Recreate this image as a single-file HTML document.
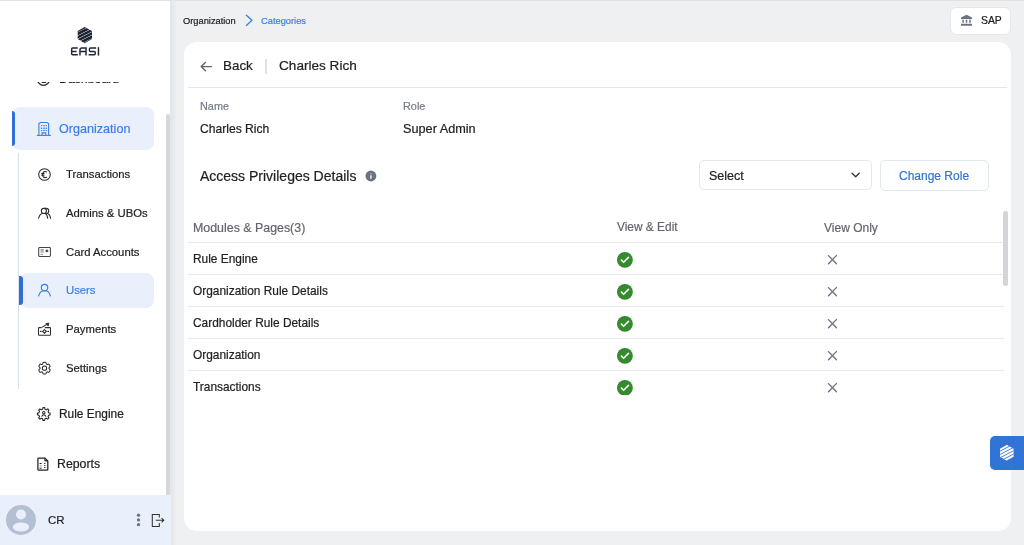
<!DOCTYPE html>
<html><head><meta charset="utf-8">
<style>
*{box-sizing:border-box;margin:0;padding:0}
html,body{width:1024px;height:545px;overflow:hidden;background:#eff0f2;font-family:"Liberation Sans",sans-serif;color:#212121}
.a{position:absolute;white-space:nowrap;line-height:1;will-change:transform;-webkit-text-stroke:0.2px currentColor}
svg{position:absolute;overflow:visible}
#topline{position:absolute;left:0;top:0;width:1024px;height:1px;background:#e2e3e5;z-index:5}
#side{position:absolute;left:0;top:0;width:171px;height:545px;background:#fff;overflow:hidden}
#shadow{position:absolute;left:171px;top:1px;width:6px;height:544px;background:linear-gradient(90deg,#e4e5e8,#eff0f2)}
.navact{position:absolute;background:#e9f0fc;border-radius:8px}
.bar{position:absolute;background:#2f6fd6;border-radius:0 3px 3px 0}
#card{position:absolute;left:184px;top:42px;width:827px;height:489px;background:#fff;border-radius:13px}
.line{position:absolute;height:1px;background:#e6e8eb}
</style></head><body>
<div id="topline"></div>
<div id="side">
  <!-- dashboard (clipped) -->
  <div class="a" style="left:59px;top:73px;font-size:12.3px">Dashboard</div>
  <svg style="left:30px;top:68px" width="30" height="22" viewBox="0 0 30 22" fill="none" stroke="#2a2a2a" stroke-width="1.15"><circle cx="13.5" cy="11.2" r="6.1"/><path d="M12.1 14.3H15.7" stroke-linecap="round"/></svg>
  <div style="position:absolute;left:0;top:0;width:170px;height:82px;background:#fff"></div>
  <!-- logo -->
  <div style="position:absolute;left:69px;top:26px;width:31px;height:31px;border-radius:6px;box-shadow:0 0 5px rgba(0,0,0,0.025)"></div>
  <svg style="left:77px;top:27px" width="15" height="16" viewBox="0 0 15 16">
    <defs><clipPath id="hx"><polygon points="7.6,0 15,3.9 15,12.1 7.6,16.2 0.7,12.1 0.7,3.9"/></clipPath></defs>
    <g clip-path="url(#hx)" stroke="#1b2130" stroke-width="2.6">
      <line x1="-4" y1="6" x2="18" y2="-5"/><line x1="-4" y1="9.3" x2="18" y2="-1.7"/><line x1="-4" y1="12.6" x2="18" y2="1.6"/><line x1="-4" y1="15.9" x2="18" y2="4.9"/><line x1="-4" y1="19.2" x2="18" y2="8.2"/><line x1="-4" y1="22.5" x2="18" y2="11.5"/>
    </g>
  </svg>
  <svg style="left:68px;top:43.6px" width="34" height="14" viewBox="0 0 34 14" fill="none" stroke="#1f2535" stroke-width="1.45">
    <path d="M9.8 4.05H4.7Q3.65 4.05 3.65 5.1V9.7Q3.65 10.75 4.7 10.75H9.8M3.65 7.4H8.6"/>
    <path d="M11.95 11.6V6Q11.95 4.05 13.9 4.05H18.05V11.6M11.95 7.4H18.05"/>
    <path d="M28.1 4.05H22.5Q21.45 4.05 21.45 5.1V6.4Q21.45 7.4 22.5 7.4H26.2Q27.25 7.4 27.25 8.5V9.7Q27.25 10.75 26.2 10.75H20.6"/>
    <path d="M30.45 3.2V11.6"/>
  </svg>

  <!-- Organization active -->
  <div class="navact" style="left:12px;top:107px;width:142px;height:43px"></div>
  <div class="bar" style="left:12px;top:111px;width:3px;height:35px"></div>
  <div class="a" style="left:59px;top:123px;font-size:12.6px;color:#3b7ee2">Organization</div>

  <!-- sub line -->
  <div style="position:absolute;left:18px;top:153px;width:1px;height:236px;background:#d9e0eb"></div>

  <div class="a" style="left:66px;top:169px;font-size:11.3px">Transactions</div>
  <div class="a" style="left:66px;top:208px;font-size:11.3px">Admins &amp; UBOs</div>
  <div class="a" style="left:66px;top:247px;font-size:11.3px">Card Accounts</div>
  <div class="navact" style="left:20px;top:273px;width:134px;height:35px"></div>
  <div class="bar" style="left:19px;top:276px;width:4px;height:29px"></div>
  <div class="a" style="left:66px;top:285px;font-size:11.3px;color:#3b7ee2">Users</div>
  <div class="a" style="left:66px;top:324px;font-size:11.3px">Payments</div>
  <div class="a" style="left:66px;top:363px;font-size:11.3px">Settings</div>

  <div class="a" style="left:59px;top:409px;font-size:11.9px">Rule Engine</div>
  <div class="a" style="left:57px;top:458px;font-size:12.3px">Reports</div>


  <!-- icons -->
  <svg style="left:33px;top:117px" width="22" height="23" viewBox="0 0 22 23" fill="none" stroke="#3b7ee2" stroke-width="1.1">
    <path d="M3.8 18.4H17.9"/>
    <path d="M5.9 18.4V6.6L7.4 5.5H14.1L15.6 6.6V18.4"/>
    <path d="M9.1 18.4V15.9H12.7V18.4"/>
    <g fill="#3b7ee2" stroke="none">
      <circle cx="8.4" cy="8.6" r="0.7"/><circle cx="11" cy="8.6" r="0.7"/><circle cx="13.4" cy="8.6" r="0.7"/>
      <circle cx="8.4" cy="11.3" r="0.7"/><circle cx="11" cy="11.3" r="0.7"/><circle cx="13.4" cy="11.3" r="0.7"/>
      <circle cx="8.4" cy="13.6" r="0.7"/><circle cx="11" cy="13.6" r="0.7"/><circle cx="13.4" cy="13.6" r="0.7"/>
    </g>
    <path d="M8.4 8.6H13.4M8.4 11.3H13.4M8.4 13.6H13.4M11 8.6V13.6" stroke-width="0.5" opacity="0.6"/>
  </svg>
  <svg style="left:34px;top:164px" width="22" height="22" viewBox="0 0 22 22" fill="none" stroke="#2a2a2a" stroke-width="1.05">
    <circle cx="10.5" cy="10.5" r="5.8"/>
    <path d="M12.9 8.1Q12.3 7.4 11.2 7.4Q8.6 7.4 8.6 10.5Q8.6 13.6 11.2 13.6Q12.3 13.6 12.9 12.9"/>
    <path d="M7.3 9.6H10.4M7.3 11.2H10.4"/>
  </svg>
  <svg style="left:34px;top:202px" width="22" height="22" viewBox="0 0 22 22" fill="none" stroke="#2a2a2a" stroke-width="1.05">
    <circle cx="9.9" cy="8.9" r="2.55"/>
    <path d="M12.2 6.35A2.55 2.55 0 0 1 12.2 11.45"/>
    <path d="M9.9 6.35H12.2M9.9 11.45H12.2"/>
    <path d="M4.5 16.6Q5.4 12.5 8.3 11.6M11.3 11.6Q13.3 12.5 13.7 16.6M14.2 11.7Q16.2 12.7 16.6 16.6"/>
  </svg>
  <svg style="left:34px;top:241px" width="22" height="22" viewBox="0 0 22 22" fill="none" stroke="#444" stroke-width="1.05">
    <rect x="4.7" y="6.5" width="11.7" height="9" rx="0.9"/>
    <path d="M6.5 8.6H9.8M6.5 9.8H9.8M6.5 11H9.8M6.5 13.3H9" stroke-width="0.7" opacity="0.8"/>
    <circle cx="12.9" cy="9.9" r="1.45" fill="#555" stroke="none"/>
  </svg>
  <svg style="left:34px;top:279px" width="22" height="22" viewBox="0 0 22 22" fill="none" stroke="#3b7ee2" stroke-width="1.15">
    <circle cx="10.5" cy="8.5" r="3.2"/>
    <path d="M4.5 17.4Q5.8 12.6 8.6 12H12.6Q15.3 12.6 16.5 17.4"/>
  </svg>
  <svg style="left:34px;top:318px" width="22" height="22" viewBox="0 0 22 22" fill="none" stroke="#2f2f2f" stroke-width="1.05">
    <path d="M7.3 9.6H5.1Q4.5 9.6 4.5 10.3V16.6Q4.5 17.3 5.1 17.3H15.9Q16.5 17.3 16.5 16.6V10.3Q16.5 9.6 15.9 9.6H10.8"/>
    <path d="M7.3 9.6L13.6 6"/>
    <path d="M15 5.1L11.9 5.5L14.2 8.1Z" fill="#2f2f2f" stroke-width="0.8" stroke-linejoin="round"/>
    <path d="M10.5 11.6L12.3 13.4L10.5 15.2L8.7 13.4Z"/>
    <path d="M6 13.4H8.4M12.6 13.4H15" stroke-width="0.8"/>
    <circle cx="6.5" cy="13.4" r="0.6" fill="#2f2f2f" stroke="none"/><circle cx="14.5" cy="13.4" r="0.6" fill="#2f2f2f" stroke="none"/>
  </svg>
  <svg style="left:34px;top:357px" width="22" height="22" viewBox="0 0 22 22" fill="none" stroke="#2a2a2a" stroke-width="1.55">
    <g transform="translate(10.5 11.2) scale(0.655) translate(-12 -12)">
    <path d="M9.594 3.94c.09-.542.56-.94 1.11-.94h2.593c.55 0 1.02.398 1.11.94l.213 1.281c.063.374.313.686.645.87.074.04.147.083.22.127.325.196.72.257 1.075.124l1.217-.456a1.125 1.125 0 0 1 1.37.49l1.296 2.247a1.125 1.125 0 0 1-.26 1.431l-1.003.827c-.293.241-.438.613-.43.992a7.723 7.723 0 0 1 0 .255c-.008.378.137.75.43.991l1.004.827c.424.35.534.955.26 1.43l-1.298 2.247a1.125 1.125 0 0 1-1.369.491l-1.217-.456c-.355-.133-.75-.072-1.076.124a6.47 6.470 0 0 1-.22.128c-.331.183-.581.495-.644.869l-.213 1.281c-.09.543-.56.94-1.11.94h-2.594c-.55 0-1.019-.398-1.110-.94l-.213-1.281c-.062-.374-.312-.686-.644-.87a6.52 6.52 0 0 1-.22-.127c-.325-.196-.72-.257-1.076-.124l-1.217.456a1.125 1.125 0 0 1-1.369-.49l-1.297-2.247a1.125 1.125 0 0 1 .26-1.431l1.004-.827c.292-.24.437-.613.43-.991a6.932 6.932 0 0 1 0-.255c.007-.38-.138-.751-.43-.992l-1.004-.827a1.125 1.125 0 0 1-.26-1.43l1.297-2.247a1.125 1.125 0 0 1 1.37-.491l1.216.456c.356.133.751.072 1.076-.124.072-.044.146-.086.22-.128.332-.183.582-.495.644-.869l.214-1.28Z"/>
    <circle cx="12" cy="12" r="3.3"/>
    </g>
  </svg>
  <svg style="left:33px;top:403px" width="22" height="22" viewBox="0 0 22 22" fill="none" stroke="#2a2a2a" stroke-width="1.1">
    <path d="M9.63 6.14 L9.95 4.66 L11.65 4.66 L11.97 6.14 L13.41 6.74 L14.68 5.91 L15.89 7.12 L15.06 8.39 L15.66 9.83 L17.14 10.15 L17.14 11.85 L15.66 12.17 L15.06 13.61 L15.89 14.88 L14.68 16.09 L13.41 15.26 L11.97 15.86 L11.65 17.34 L9.95 17.34 L9.63 15.86 L8.19 15.26 L6.92 16.09 L5.71 14.88 L6.54 13.61 L5.94 12.17 L4.46 11.85 L4.46 10.15 L5.94 9.83 L6.54 8.39 L5.71 7.12 L6.92 5.91 L8.19 6.74Z" stroke-linejoin="round"/>
    <circle cx="10.8" cy="9.7" r="1.25"/>
    <path d="M8.7 13.6Q9.3 11.7 10.8 11.7Q12.3 11.7 12.9 13.6"/>
  </svg>
  <svg style="left:32px;top:453px" width="22" height="22" viewBox="0 0 22 22" fill="none" stroke="#222" stroke-width="1.25">
    <path d="M12.9 5H6.4Q5.9 5 5.9 5.5V16.5Q5.9 17 6.4 17H15.3Q15.8 17 15.8 16.5V7.9Z"/>
    <path d="M12.9 5V7.4Q12.9 7.9 13.4 7.9H15.8" stroke-width="1.1"/>
    <path d="M7.6 10.5H9.6M7.6 15.2H9.6M12.2 10.5H13.4M12.2 12.5H13.4M12.2 14.5H13.4" stroke-width="1"/>
    <path d="M7.6 12.9H9.6" stroke-width="1" opacity="0.5"/>
  </svg>
  <!-- dashboard icon -->
  <!-- sidebar scrollbar -->
  <div style="position:absolute;left:166px;top:114px;width:4px;height:381px;background:#d5d7db;border-radius:2px 2px 1px 1px"></div>
  <div style="position:absolute;left:170px;top:0;width:1px;height:545px;background:#e2e6ed"></div>

  <!-- bottom user -->
  <div style="position:absolute;left:0;top:495px;width:171px;height:50px;background:#eaf0fb"></div>
  <svg style="left:6px;top:505px" width="30" height="30" viewBox="0 0 30 30">
    <circle cx="15" cy="15" r="15" fill="#b3bfd2"/>
    <circle cx="15" cy="9.5" r="5" fill="#eaf0fb"/>
    <ellipse cx="15" cy="22" rx="8.2" ry="4.6" fill="#eaf0fb"/>
  </svg>
  <div class="a" style="left:48px;top:515px;font-size:11.5px">CR</div>
  <g></g>
  <svg style="left:132px;top:508px" width="36" height="24" viewBox="0 0 36 24">
    <g fill="#6b7280"><circle cx="6.5" cy="7.2" r="1.65"/><circle cx="6.5" cy="11.9" r="1.65"/><circle cx="6.5" cy="16.65" r="1.65"/></g>
    <g fill="none" stroke="#333" stroke-width="1.05">
      <path d="M27.3 9.6V6.5H20.3V18.5H27.3V14.9"/>
      <path d="M23.8 12.2H31.6M29.6 10.1L31.8 12.2L29.6 14.3"/>
    </g>
  </svg>

</div>
<div id="shadow"></div>

<!-- main -->
<div class="a" style="left:183px;top:17px;font-size:9.3px;color:#222">Organization</div>
<div class="a" style="left:261px;top:17px;font-size:9.3px;color:#3b7ee2">Categories</div>

<div style="position:absolute;left:950px;top:7px;width:61px;height:28px;background:#fff;border:1px solid #e3e6eb;border-radius:6px"></div>
<div class="a" style="left:981px;top:16px;font-size:10.4px">SAP</div>

<div id="card"></div>
<div class="a" style="left:223px;top:59px;font-size:13.4px">Back</div>
<div style="position:absolute;left:265px;top:59px;width:1.5px;height:15px;background:#dfe1e5"></div>
<div class="a" style="left:279px;top:59px;font-size:13.6px">Charles Rich</div>
<div class="line" style="left:188px;top:87px;width:819px;background:#e3e7ee"></div>

<div class="a" style="left:200px;top:101px;font-size:10.9px;color:#737b87">Name</div>
<div class="a" style="left:200px;top:123px;font-size:12.1px">Charles Rich</div>
<div class="a" style="left:403px;top:101px;font-size:10.9px;color:#737b87">Role</div>
<div class="a" style="left:403px;top:123px;font-size:12.7px">Super Admin</div>

<div class="a" style="left:200px;top:169px;font-size:14px">Access Privileges Details</div>

<div style="position:absolute;left:699px;top:160px;width:173px;height:30px;border:1px solid #e3e6ea;border-radius:5px"></div>
<div class="a" style="left:709px;top:170px;font-size:12.5px">Select</div>
<div style="position:absolute;left:880px;top:160px;width:109px;height:31px;border:1px solid #e1e7f0;border-radius:5px"></div>
<div class="a" style="left:899px;top:170px;font-size:12px;color:#3574d4">Change Role</div>

<div class="a" style="left:193px;top:222px;font-size:12.4px;color:#62666d">Modules &amp; Pages(3)</div>
<div class="a" style="left:617px;top:222px;font-size:11.9px;color:#62666d">View &amp; Edit</div>
<div class="a" style="left:824px;top:222px;font-size:12px;color:#62666d">View Only</div>

<div class="line" style="left:188px;top:242px;width:816px"></div>
<div class="line" style="left:188px;top:274px;width:816px"></div>
<div class="line" style="left:188px;top:306px;width:816px"></div>
<div class="line" style="left:188px;top:338px;width:816px"></div>
<div class="line" style="left:188px;top:370px;width:816px"></div>

<div class="a" style="left:193px;top:254px;font-size:11.9px">Rule Engine</div>
<div class="a" style="left:193px;top:286px;font-size:11.9px">Organization Rule Details</div>
<div class="a" style="left:193px;top:318px;font-size:11.9px">Cardholder Rule Details</div>
<div class="a" style="left:193px;top:350px;font-size:11.9px">Organization</div>
<div class="a" style="left:193px;top:382px;font-size:11.9px">Transactions</div>

<!-- table scrollbar -->
<div style="position:absolute;left:1003px;top:211px;width:5px;height:75px;background:#d3d5d9;border-radius:3px"></div>

<!-- float button -->
<div style="position:absolute;left:990px;top:436px;width:34px;height:34px;background:#3273d6;border-radius:5px 0 0 5px"></div>

<!-- main icons -->
<svg style="left:240px;top:9px" width="18" height="22" viewBox="0 0 18 22" fill="none" stroke="#3b7ee2" stroke-width="1.3" stroke-linecap="round" stroke-linejoin="round"><path d="M6.4 6.3L11.9 11.3L6.4 16.4"/></svg>
<svg style="left:955px;top:8px" width="22" height="22" viewBox="0 0 22 22" fill="#6b7280">
  <path d="M11.5 6.8L17 9.6V10.9H6V9.6Z"/>
  <rect x="7.3" y="11.6" width="1.5" height="3.2"/><rect x="10.75" y="11.6" width="1.5" height="3.2"/><rect x="14.2" y="11.6" width="1.5" height="3.2"/>
  <rect x="6" y="15.8" width="11" height="2" rx="0.3"/>
</svg>
<svg style="left:196px;top:56px" width="22" height="22" viewBox="0 0 22 22" fill="none" stroke="#5f6672" stroke-width="1.4" stroke-linecap="round" stroke-linejoin="round"><path d="M15.4 10.6H5.2M9.4 6.4L5.2 10.6L9.4 14.7"/></svg>
<svg style="left:360px;top:165px" width="22" height="22" viewBox="0 0 22 22"><circle cx="10.9" cy="11" r="5.4" fill="#6b7280"/><rect x="10.15" y="10.3" width="1.5" height="3.4" fill="#fff" opacity="0.9"/><rect x="10.15" y="8.3" width="1.5" height="1.2" fill="#fff" opacity="0.5"/></svg>
<svg style="left:845px;top:164px" width="22" height="22" viewBox="0 0 22 22" fill="none" stroke="#333" stroke-width="1.35" stroke-linecap="round" stroke-linejoin="round"><path d="M7.1 9.2L10.7 12.7L14.4 9.1"/></svg>
<div style="position:absolute;left:600px;top:243px;width:260px;height:152px;overflow:hidden">
<svg style="left:14px;top:6px" width="22" height="22" viewBox="0 0 22 22"><circle cx="10.9" cy="10.9" r="7.9" fill="#358a2d"/><path d="M7.4 11.1L9.6 13.3L14.5 8.4" fill="none" stroke="#fff" stroke-width="1.6" stroke-linecap="round" stroke-linejoin="round"/></svg>
<svg style="left:221px;top:6px" width="22" height="22" viewBox="0 0 22 22" fill="none" stroke="#6b7280" stroke-width="1.35" stroke-linecap="round"><path d="M7.4 6.6L15.4 14.8M15.4 6.6L7.4 14.8"/></svg>
<svg style="left:14px;top:38px" width="22" height="22" viewBox="0 0 22 22"><circle cx="10.9" cy="10.9" r="7.9" fill="#358a2d"/><path d="M7.4 11.1L9.6 13.3L14.5 8.4" fill="none" stroke="#fff" stroke-width="1.6" stroke-linecap="round" stroke-linejoin="round"/></svg>
<svg style="left:221px;top:38px" width="22" height="22" viewBox="0 0 22 22" fill="none" stroke="#6b7280" stroke-width="1.35" stroke-linecap="round"><path d="M7.4 6.6L15.4 14.8M15.4 6.6L7.4 14.8"/></svg>
<svg style="left:14px;top:70px" width="22" height="22" viewBox="0 0 22 22"><circle cx="10.9" cy="10.9" r="7.9" fill="#358a2d"/><path d="M7.4 11.1L9.6 13.3L14.5 8.4" fill="none" stroke="#fff" stroke-width="1.6" stroke-linecap="round" stroke-linejoin="round"/></svg>
<svg style="left:221px;top:70px" width="22" height="22" viewBox="0 0 22 22" fill="none" stroke="#6b7280" stroke-width="1.35" stroke-linecap="round"><path d="M7.4 6.6L15.4 14.8M15.4 6.6L7.4 14.8"/></svg>
<svg style="left:14px;top:102px" width="22" height="22" viewBox="0 0 22 22"><circle cx="10.9" cy="10.9" r="7.9" fill="#358a2d"/><path d="M7.4 11.1L9.6 13.3L14.5 8.4" fill="none" stroke="#fff" stroke-width="1.6" stroke-linecap="round" stroke-linejoin="round"/></svg>
<svg style="left:221px;top:102px" width="22" height="22" viewBox="0 0 22 22" fill="none" stroke="#6b7280" stroke-width="1.35" stroke-linecap="round"><path d="M7.4 6.6L15.4 14.8M15.4 6.6L7.4 14.8"/></svg>
<svg style="left:14px;top:134px" width="22" height="22" viewBox="0 0 22 22"><circle cx="10.9" cy="10.9" r="7.9" fill="#358a2d"/><path d="M7.4 11.1L9.6 13.3L14.5 8.4" fill="none" stroke="#fff" stroke-width="1.6" stroke-linecap="round" stroke-linejoin="round"/></svg>
<svg style="left:221px;top:134px" width="22" height="22" viewBox="0 0 22 22" fill="none" stroke="#6b7280" stroke-width="1.35" stroke-linecap="round"><path d="M7.4 6.6L15.4 14.8M15.4 6.6L7.4 14.8"/></svg>
</div>
<svg style="left:994px;top:440px" width="26" height="26" viewBox="0 0 26 26">
  <defs><clipPath id="hx2"><polygon points="6.8,0 13.6,4 13.6,12 6.8,16 0,12 0,4"/></clipPath></defs>
  <g transform="translate(6 4.8)">
  <g clip-path="url(#hx2)"><rect x="-2" y="-2" width="20" height="20" fill="#fff"/>
  <g stroke="#3273d6" stroke-width="0.9"><line x1="-4" y1="5.2" x2="18" y2="-6.3"/><line x1="-4" y1="8.5" x2="18" y2="-3"/><line x1="-4" y1="11.8" x2="18" y2="0.3"/><line x1="-4" y1="15.1" x2="18" y2="3.6"/><line x1="-4" y1="18.4" x2="18" y2="6.9"/><line x1="-4" y1="21.7" x2="18" y2="10.2"/></g></g></g>
</svg>
</body></html>
